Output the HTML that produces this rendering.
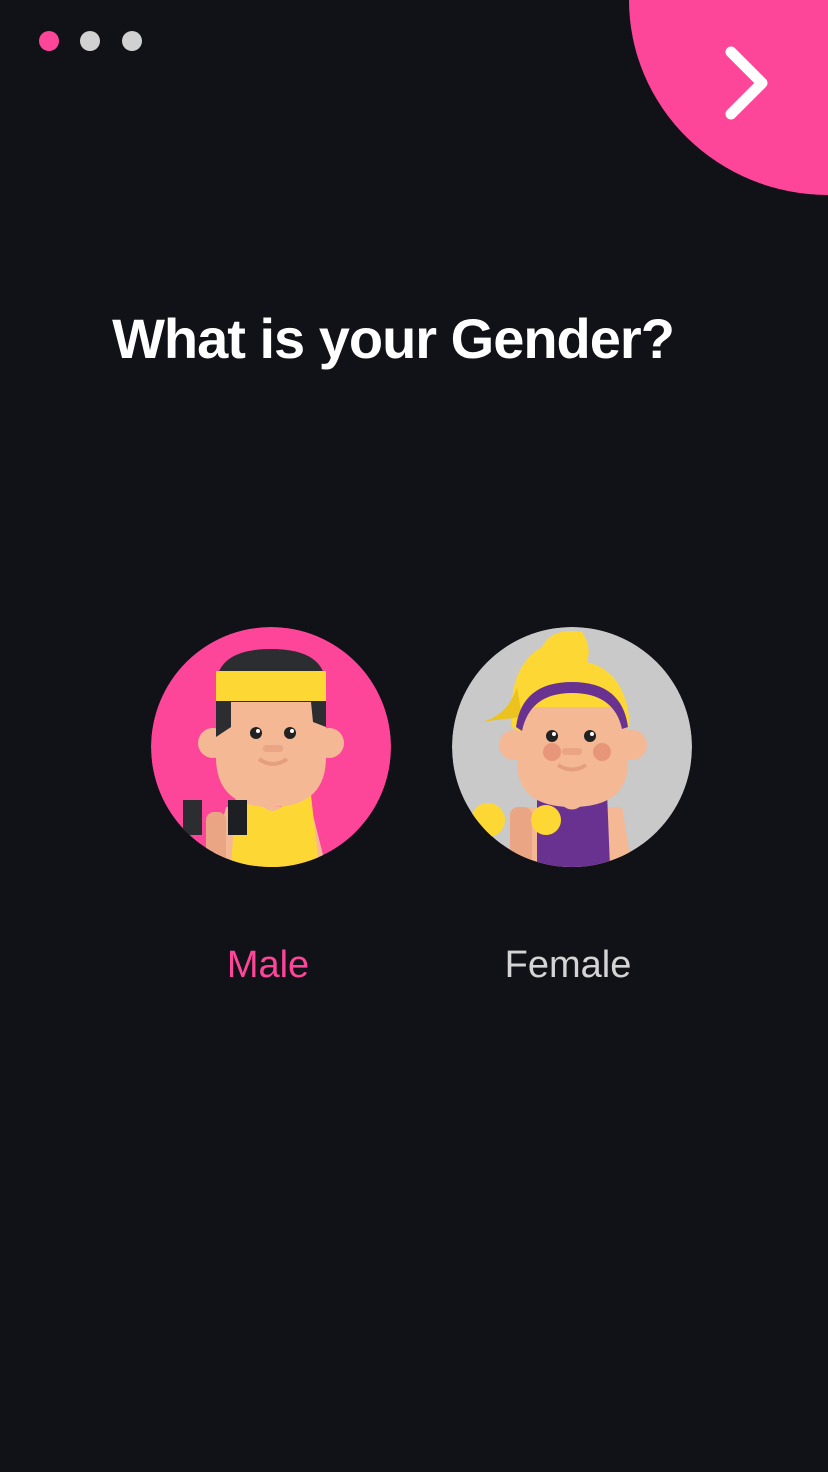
<!DOCTYPE html>
<html><head><meta charset="utf-8"><style>
html,body{margin:0;padding:0;background:#111217;width:828px;height:1472px;overflow:hidden;font-family:"Liberation Sans",sans-serif}
.dot{position:absolute;top:31px;width:20px;height:20px;border-radius:50%}
.corner{position:absolute;left:629px;top:0;width:199px;height:195px;background:#fd4599;border-bottom-left-radius:199px 195px}
h1{position:absolute;left:0;width:786px;top:306px;margin:0;text-align:center;color:#fff;font-size:56px;font-weight:bold;letter-spacing:-1px}
.lbl{position:absolute;top:944px;font-size:38px;width:240px;text-align:center}
svg.av{position:absolute;top:627px}
</style></head><body>
<div class="dot" style="left:39px;background:#fd4599"></div>
<div class="dot" style="left:80px;background:#d1d1d1"></div>
<div class="dot" style="left:122px;background:#d1d1d1"></div>
<div class="corner"></div>
<svg style="position:absolute;left:700px;top:30px" width="100" height="110"><path d="M31 22 L62 53 L31 84" fill="none" stroke="#fff" stroke-width="11" stroke-linecap="round" stroke-linejoin="round"/></svg>
<h1>What is your Gender?</h1>

<svg class="av" style="left:151px" width="240" height="240" viewBox="0 0 240 240">
<defs><clipPath id="c1"><circle cx="120" cy="120" r="120"/></clipPath></defs>
<g clip-path="url(#c1)">
<circle cx="120" cy="120" r="120" fill="#fd4599"/>
<path d="M75 180 L160 180 L175 240 L60 240Z" fill="#f4b895"/>
<path d="M85 168 L105 168 Q120 200 140 168 L160 168 L168 240 L80 240Z" fill="#fdd835"/>
<circle cx="62" cy="116" r="15" fill="#f4b895"/><circle cx="178" cy="116" r="15" fill="#f4b895"/>
<path d="M65 60 L175 60 L175 130 Q175 180 120 180 Q65 180 65 130Z" fill="#f4b895"/>
<path d="M65 60 Q65 22 120 22 Q175 22 175 60 L175 100 L162 95 L160 75 L80 75 L80 100 L65 110Z" fill="#2b2d30"/>
<rect x="65" y="44" width="110" height="30" fill="#fdd835"/>
<circle cx="105" cy="106" r="6" fill="#222"/><circle cx="139" cy="106" r="6" fill="#222"/>
<circle cx="107" cy="104" r="2" fill="#fff"/><circle cx="141" cy="104" r="2" fill="#fff"/>
<rect x="112" y="118" width="20" height="7" rx="3" fill="#eaa584"/>
<path d="M108 132 Q122 142 136 132" stroke="#e69f7e" stroke-width="4" fill="none"/>
<rect x="18" y="225" width="50" height="20" fill="#f4b895"/>
<rect x="55" y="185" width="20" height="60" rx="8" fill="#eaa584"/>
<rect x="32" y="173" width="19" height="35" fill="#2b2d30"/>
<rect x="77" y="173" width="19" height="35" fill="#1e1f22"/>
</g></svg>

<svg class="av" style="left:452px" width="240" height="240" viewBox="0 0 240 240">
<defs><clipPath id="c2"><circle cx="120" cy="120" r="120"/></clipPath></defs>
<g clip-path="url(#c2)">
<circle cx="120" cy="120" r="120" fill="#c9c9c9"/>
<path d="M70 180 L170 180 L180 240 L60 240Z" fill="#f4b895"/>
<path d="M85 165 L100 165 Q120 200 140 165 L155 165 L158 240 L85 240Z" fill="#6a3290"/>
<circle cx="62" cy="118" r="15" fill="#f4b895"/><circle cx="180" cy="118" r="15" fill="#f4b895"/>
<path d="M65 80 L176 80 L176 135 Q176 180 120 180 Q65 180 65 135Z" fill="#f4b895"/>
<path d="M60 100 Q55 40 90 20 Q100 0 130 5 Q140 20 135 35 Q175 45 178 100 L168 95 L160 80 L75 80 L68 105Z" fill="#fdd835"/>
<path d="M28 95 Q55 90 65 60 L70 90Z" fill="#ecc21f"/>
<path d="M64 100 Q70 55 120 55 Q170 55 176 100 L170 102 Q162 66 120 66 Q78 66 70 104Z" fill="#6a3290"/>
<circle cx="100" cy="125" r="9" fill="#e8967a"/><circle cx="150" cy="125" r="9" fill="#e8967a"/>
<circle cx="100" cy="109" r="6" fill="#222"/><circle cx="138" cy="109" r="6" fill="#222"/>
<circle cx="102" cy="107" r="2" fill="#fff"/><circle cx="140" cy="107" r="2" fill="#fff"/>
<rect x="110" y="121" width="20" height="7" rx="3" fill="#eaa584"/>
<path d="M106 138 Q120 147 134 138" stroke="#e69f7e" stroke-width="4" fill="none"/>
<rect x="58" y="180" width="22" height="60" rx="8" fill="#eaa584"/>
<circle cx="36" cy="193" r="17" fill="#fdd835"/>
<circle cx="94" cy="193" r="15" fill="#fdd835"/>
</g></svg>

<div class="lbl" style="left:148px;color:#fd4599">Male</div>
<div class="lbl" style="left:448px;color:#d4d4d4">Female</div>
</body></html>
